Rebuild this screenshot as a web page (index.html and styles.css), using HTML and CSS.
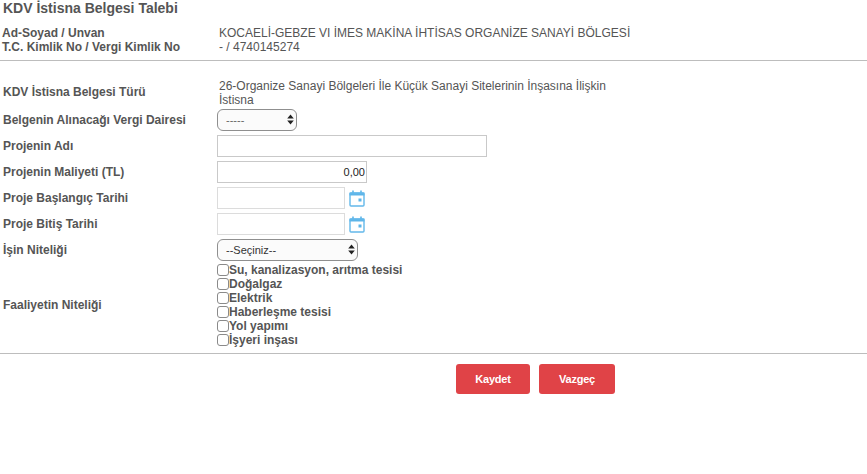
FILE: index.html
```html
<!DOCTYPE html>
<html lang="tr">
<head>
<meta charset="utf-8">
<title>KDV İstisna Belgesi Talebi</title>
<link rel="stylesheet" href="styles.css">
</head>
<body>
<h1 class="title">KDV İstisna Belgesi Talebi</h1>
<section class="info">
  <div class="info-labels">
    <div>Ad-Soyad / Unvan</div>
    <div>T.C. Kimlik No / Vergi Kimlik No</div>
  </div>
  <div class="info-values">
    <div>KOCAELİ-GEBZE VI İMES MAKİNA İHTİSAS ORGANİZE SANAYİ BÖLGESİ</div>
    <div>- / 4740145274</div>
  </div>
</section>
<hr class="rule">
<form class="form">
  <div class="row row-type">
    <label class="label">KDV İstisna Belgesi Türü</label>
    <div class="type-text">26-Organize Sanayi Bölgeleri İle Küçük Sanayi Sitelerinin İnşasına İlişkin İstisna</div>
  </div>
  <div class="row">
    <label class="label">Belgenin Alınacağı Vergi Dairesi</label>
    <div class="select-wrap select-small">
      <select class="select select-dim"><option>-----</option></select>
      <svg class="arrows" width="7" height="11" viewBox="0 0 7 11"><path d="M3.5 0.5L6.8 4.4H0.2Z M3.5 10.5L0.2 6.6H6.8Z" fill="#222"/></svg>
    </div>
  </div>
  <div class="row">
    <label class="label">Projenin Adı</label>
    <input class="input input-wide" type="text">
  </div>
  <div class="row">
    <label class="label">Projenin Maliyeti (TL)</label>
    <input class="input input-cost" type="text" value="0,00">
  </div>
  <div class="row">
    <label class="label">Proje Başlangıç Tarihi</label>
    <input class="input input-date" type="text">
    <svg class="cal" width="16" height="17" viewBox="0 0 16 17"><path d="M4 0.5V3M12 0.5V3" stroke="#5db5e8" stroke-width="1.6"/><path d="M0.5 2.5H15.5V5.5H0.5Z" fill="#5db5e8"/><rect x="1" y="3" width="14" height="13" rx="1" fill="none" stroke="#63b8ea" stroke-width="1.4"/><rect x="9.5" y="8.5" width="3" height="3" fill="#5db5e8"/></svg>
  </div>
  <div class="row">
    <label class="label">Proje Bitiş Tarihi</label>
    <input class="input input-date" type="text">
    <svg class="cal" width="16" height="17" viewBox="0 0 16 17"><path d="M4 0.5V3M12 0.5V3" stroke="#5db5e8" stroke-width="1.6"/><path d="M0.5 2.5H15.5V5.5H0.5Z" fill="#5db5e8"/><rect x="1" y="3" width="14" height="13" rx="1" fill="none" stroke="#63b8ea" stroke-width="1.4"/><rect x="9.5" y="8.5" width="3" height="3" fill="#5db5e8"/></svg>
  </div>
  <div class="row">
    <label class="label">İşin Niteliği</label>
    <div class="select-wrap select-large">
      <select class="select"><option>--Seçiniz--</option></select>
      <svg class="arrows" width="7" height="11" viewBox="0 0 7 11"><path d="M3.5 0.5L6.8 4.4H0.2Z M3.5 10.5L0.2 6.6H6.8Z" fill="#222"/></svg>
    </div>
  </div>
  <div class="row row-checks">
    <label class="label">Faaliyetin Niteliği</label>
    <div class="checks">
      <label class="check"><input type="checkbox">Su, kanalizasyon, arıtma tesisi</label>
      <label class="check"><input type="checkbox">Doğalgaz</label>
      <label class="check"><input type="checkbox">Elektrik</label>
      <label class="check"><input type="checkbox">Haberleşme tesisi</label>
      <label class="check"><input type="checkbox">Yol yapımı</label>
      <label class="check"><input type="checkbox">İşyeri inşası</label>
    </div>
  </div>
</form>
<hr class="rule rule-bottom">
<div class="actions">
  <button class="btn btn-save" type="button">Kaydet</button>
  <button class="btn btn-cancel" type="button">Vazgeç</button>
</div>
</body>
</html>
```
FILE: styles.css
```css
* { box-sizing: border-box; }
html, body { margin: 0; padding: 0; background: #fff; }
body {
  width: 867px;
  height: 474px;
  overflow: hidden;
  font-family: "Liberation Sans", Arial, sans-serif;
  font-size: 12px;
  color: #555;
}
.title {
  margin: 0;
  padding: 1px 0 0 3px;
  height: 26px;
  font-size: 14px;
  line-height: 15px;
  font-weight: bold;
  color: #555;
}
.info {
  display: grid;
  grid-template-columns: 219px 420px;
  height: 34px;
  line-height: 14px;
}
.info-labels { padding-left: 2px; font-weight: bold; }
.info-values { color: #555; }
.rule {
  margin: 0;
  border: 0;
  height: 1px;
  background: #bdbdbd;
}
.form {
  display: flex;
  flex-direction: column;
  gap: 4px;
  padding-top: 17px;
}
.row {
  display: flex;
  align-items: center;
  min-height: 22px;
}
.label {
  flex: 0 0 217px;
  padding-left: 3px;
  font-weight: bold;
  line-height: 14px;
}
.row-type { height: 28px; margin-bottom: -1px; }
.type-text {
  width: 402px;
  padding: 1px 0 0 2px;
  height: 29px;
  line-height: 14px;
}
.select-wrap { position: relative; height: 22px; }
.select-small { width: 80px; }
.select-large { width: 141px; }
.select {
  appearance: none;
  -webkit-appearance: none;
  display: block;
  width: 100%;
  height: 22px;
  padding: 0 0 0 8px;
  border: 1px solid #8f8f8f;
  border-radius: 6px;
  background: #fbfbfb;
  font-family: "Liberation Sans", Arial, sans-serif;
  font-size: 11px;
  color: #333;
}
.select-dim { color: #666; }
.arrows {
  position: absolute;
  right: 3px;
  top: 5px;
  pointer-events: none;
}
.input {
  display: block;
  height: 22px;
  padding: 0 1px;
  border: 1px solid #c9c9c9;
  border-radius: 0;
  background: #fff;
  font-family: "Liberation Sans", Arial, sans-serif;
  font-size: 11px;
  color: #222;
  outline: 0;
}
.input-wide { width: 270px; }
.input-cost { width: 150px; text-align: right; }
.input-date { width: 128px; border-color: #dcdcdc; }
.cal { margin-left: 4px; flex: none; }
.row-checks { margin-top: -2px; }
.checks { display: flex; flex-direction: column; }
.check {
  display: flex;
  align-items: center;
  height: 14px;
  font-weight: bold;
  line-height: 14px;
}
.check input {
  appearance: none;
  -webkit-appearance: none;
  width: 12px;
  height: 12px;
  margin: 0;
  border: 1px solid #8a8a8a;
  border-radius: 3px;
  background: #fff;
  flex: none;
}
.rule-bottom { margin-top: 6px; }
.actions {
  display: flex;
  gap: 9px;
  padding: 10px 0 0 456px;
}
.btn {
  height: 30px;
  padding: 0;
  border: 0;
  border-radius: 3px;
  background: #e04347;
  color: #fff;
  font-family: "Liberation Sans", Arial, sans-serif;
  font-size: 11px;
  font-weight: bold;
  letter-spacing: -0.2px;
}
.btn-save { width: 74px; }
.btn-cancel { width: 76px; }
```
